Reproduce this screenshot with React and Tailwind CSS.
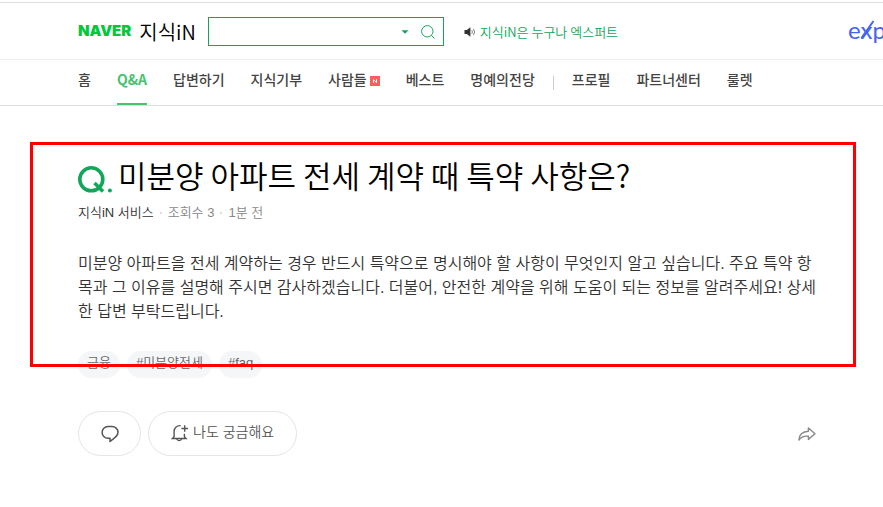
import { useState } from 'react';

const mainMenu = ['홈', 'Q&A', '답변하기', '지식기부', '사람들', '베스트', '명예의전당'];
const subMenu = ['프로필', '파트너센터', '룰렛'];
const tags = ['금융', '#미분양전세', '#faq'];

function MenuLink({ label, active, isNew }) {
  return (
    <a
      href="#"
      className={
        active
          ? 'flex items-center h-full pb-[6px] font-bold text-[#45c36f] border-b-2 border-[#45c36f]'
          : 'flex items-center h-full pb-[6px] font-medium text-[#444] border-b-2 border-transparent'
      }
    >
      {label}
      {isNew && (
        <svg className="ml-[3px] mt-1 w-[10px] h-[10px]" viewBox="0 0 10 10" aria-hidden="true">
          <rect width="10" height="10" fill="#ff5c5c" />
          <path d="M3.5 7V3.6L6.5 6.6V3.2" fill="none" stroke="#fff" strokeWidth="1" />
        </svg>
      )}
    </a>
  );
}

function Header() {
  const [query, setQuery] = useState('');

  return (
    <header className="mt-[2px] font-['Noto_Sans_CJK_KR',sans-serif] border-t border-[#ddd]">
      {/* Logo and search */}
      <div className="flex items-center h-14 pt-px pl-[78px] overflow-hidden">
        <a href="#" className="font-['Inter',sans-serif] font-black text-[15px] text-[#03c73c]">
          NAVER
        </a>
        <a href="#" className="ml-2 text-xl leading-6 font-[350] text-black">
          지식iN
        </a>
        <form className="ml-3 flex items-center w-[236px] h-[29px] border border-[#12a65b] shrink-0">
          <input
            type="text"
            aria-label="검색어"
            value={query}
            onChange={(e) => setQuery(e.target.value)}
            className="flex-1 min-w-0 h-full px-2 text-sm outline-none"
          />
          <button type="button" aria-label="자동완성" className="p-1">
            <svg className="w-2 h-1" viewBox="0 0 8 4" fill="#12a65b">
              <path d="M0.5 0.3h7L4 3.8z" />
            </svg>
          </button>
          <button type="submit" aria-label="검색" className="ml-2 mr-2">
            <svg className="w-[14px] h-[14px]" viewBox="0 0 14 14" fill="none" stroke="#12a65b" strokeWidth="1">
              <circle cx="6.3" cy="6.3" r="5.7" />
              <path d="M10.3 10.3l3.2 3.2" />
            </svg>
          </button>
        </form>
        <a href="#" className="ml-5 flex items-center gap-1 text-[13px] font-[350] text-[#12a65b] shrink-0">
          <svg className="w-3 h-[10px]" viewBox="0 0 12 10" aria-hidden="true">
            <path d="M0.5 3h2.3L6.4 0.3v9.4L2.8 7H0.5z" fill="#333" />
            <path d="M7.8 3.2q1.3 1.8 0 3.6M9.4 1.8q2.6 3.2 0 6.4" fill="none" stroke="#777" strokeWidth="0.9" />
          </svg>
          지식iN은 누구나 엑스퍼트
        </a>
        <a
          href="#"
          className="relative ml-auto w-[35px] pb-1 shrink-0 overflow-hidden font-['Lato',sans-serif] text-2xl text-[#4563f0]"
        >
          exp
          <svg className="absolute left-3 top-1 w-4 h-5" viewBox="0 0 16 20" aria-hidden="true">
            <path d="M1.5 20L13.5 3" stroke="#4563f0" strokeWidth="2" />
          </svg>
        </a>
      </div>

      {/* Menu */}
      <nav className="flex items-center gap-[26px] h-[47px] pl-[78px] text-sm whitespace-nowrap border-t border-[#ececec] border-b border-b-[#ddd]">
        {mainMenu.map((label) => (
          <MenuLink key={label} label={label} active={label === 'Q&A'} isNew={label === '사람들'} />
        ))}
        <span className="w-px h-[14px] -mx-2 bg-[#ccc]" />
        {subMenu.map((label) => (
          <MenuLink key={label} label={label} />
        ))}
      </nav>
    </header>
  );
}

function Question() {
  return (
    <article className="relative pt-[17px] pb-3 pl-12 pr-[34px] font-[350]">
      <h1 className="flex items-start pb-1 font-['Noto_Sans_CJK_KR',sans-serif] text-[31px] leading-8 text-black">
        <svg className="w-[34px] h-[27px] mt-[7px] mr-[6px] shrink-0" viewBox="0 0 34 27" role="img" aria-label="질문">
          <circle cx="13.3" cy="13.3" r="11.5" fill="none" stroke="#12a65b" strokeWidth="3.6" />
          <path d="M16.5 17l8.5 8.5" stroke="#12a65b" strokeWidth="3.6" />
          <circle cx="31.9" cy="24.6" r="2" fill="#12a65b" />
        </svg>
        미분양 아파트 전세 계약 때 특약 사항은?
      </h1>
      <p className="mt-1 flex items-center gap-[5px] text-[13px] leading-6 text-[#888]">
        <span className="text-[#333]">지식iN 서비스</span>
        <span className="w-[2px] h-[2px] mx-px bg-[#ddd]" />
        <span>조회수 3</span>
        <span className="w-[2px] h-[2px] mx-px bg-[#ddd]" />
        <span>1분 전</span>
      </p>
      <p className="mt-[27px] text-base leading-6 break-all text-[#333]">
        미분양 아파트을 전세 계약하는 경우 반드시 특약으로 명시해야 할 사항이 무엇인지 알고 싶습니다. 주요 특약 항목과 그
        이유를 설명해 주시면 감사하겠습니다. 더불어, 안전한 계약을 위해 도움이 되는 정보를 알려주세요! 상세한 답변
        부탁드립니다.
      </p>
      <ul className="mt-[27px] flex gap-[7px] text-[13px] leading-6">
        {tags.map((tag) => (
          <li key={tag}>
            <a href="#" className="block px-[9px] pb-[3px] rounded-full bg-[#f4f6f8] text-[#666]">
              {tag}
            </a>
          </li>
        ))}
      </ul>
      {/* Highlight frame, runs across the tags */}
      <div className="absolute inset-x-0 top-0 bottom-[23px] border-3 border-[#f00] pointer-events-none" />
    </article>
  );
}

function Actions() {
  return (
    <div className="flex items-center gap-[7px] mt-[21px] pl-12 pr-10 text-sm font-[350] text-[#555]">
      <button
        type="button"
        aria-label="댓글"
        className="flex items-center justify-center w-[63px] h-[45px] rounded-full border border-[#e5e5e5]"
      >
        <svg className="w-[18px] h-[18px]" viewBox="0 0 18 18" fill="none" stroke="#555" strokeWidth="1.5" strokeLinejoin="round">
          <path d="M7 1.5h4a6 6 0 0 1 6 5.7c0 3.600-3 5.600-8 9.300v-3.200H7A5.900 5.900 0 0 1 7 1.500z" />
        </svg>
      </button>
      <button type="button" className="flex items-center gap-1 h-[45px] px-[22px] pb-1 rounded-full border border-[#e5e5e5]">
        <svg className="mt-[2px] w-[18px] h-[18px]" viewBox="0 0 18 18" fill="none" stroke="#555" strokeWidth="1.4">
          <path d="M9.6 1.7a5.6 5.6 0 0 0-6.5 5.5v5.6l-1.7 1.7h13.6l-1.6-1.7V9.7" />
          <path d="M5.6 14.8q2.6 3.6 5.2 0M13.7 1.2v6.6M10.4 4.5H17" />
        </svg>
        나도 궁금해요
      </button>
      <button type="button" aria-label="공유" className="ml-auto">
        <svg className="w-[18px] h-[14px]" viewBox="0 0 18 14" fill="none" stroke="#888" strokeWidth="1.4" strokeLinejoin="round">
          <path d="M10.4 1l6.6 5.8-6.6 5.6V9.2C6 8.700 3 10 .9 13 .9 8 4.500 4.300 10.400 4.200z" />
        </svg>
      </button>
    </div>
  );
}

export default function App() {
  return (
    <div className="min-h-screen overflow-hidden bg-white font-['Liberation_Sans','Noto_Sans_CJK_KR',sans-serif]">
      <Header />
      <main className="mt-9 ml-[30px] mr-[27px]">
        <Question />
        <Actions />
      </main>
    </div>
  );
}
